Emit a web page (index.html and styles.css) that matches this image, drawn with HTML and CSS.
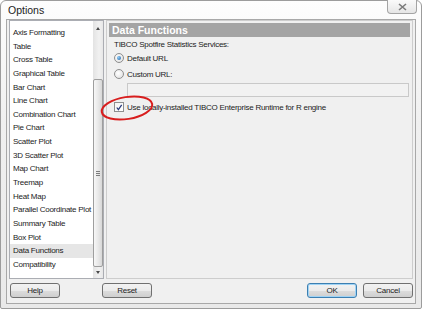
FILE: index.html
```html
<!DOCTYPE html>
<html lang="en">
<head>
  <meta charset="UTF-8">
  <title>Options</title>
  <link rel="stylesheet" href="styles.css">
</head>
<body>
  <div class="window">
    <div class="titlebar">
      <span class="title">Options</span>
      <button class="close" aria-label="Close">
        <svg width="9" height="8" viewBox="0 0 9 8"><path d="M1 1 L8 7 M8 1 L1 7" stroke="#7a7a7a" stroke-width="1.6" fill="none"/></svg>
      </button>
    </div>

    <div class="client">
      <div class="main">
        <div class="listbox">
          <ul class="items">
            <li>Axis Formatting</li>
            <li>Table</li>
            <li>Cross Table</li>
            <li>Graphical Table</li>
            <li>Bar Chart</li>
            <li>Line Chart</li>
            <li>Combination Chart</li>
            <li>Pie Chart</li>
            <li>Scatter Plot</li>
            <li>3D Scatter Plot</li>
            <li>Map Chart</li>
            <li>Treemap</li>
            <li>Heat Map</li>
            <li>Parallel Coordinate Plot</li>
            <li>Summary Table</li>
            <li>Box Plot</li>
            <li class="selected">Data Functions</li>
            <li>Compatibility</li>
          </ul>
          <div class="scrollbar">
            <span class="arrow up"></span>
            <div class="thumb"><span class="grip"></span></div>
            <span class="arrow down"></span>
          </div>
        </div>

        <div class="panel">
          <div class="panel-head">Data Functions</div>
          <div class="panel-body">
            <p class="label">TIBCO Spotfire Statistics Services:</p>
            <div class="option"><span class="radio checked"></span>Default URL</div>
            <div class="option custom"><span class="radio"></span>Custom URL:</div>
            <div class="textbox"></div>
            <div class="option check-row">
              <span class="checkbox">
                <svg width="9" height="9" viewBox="0 0 9 9"><path d="M2 4.5 L3.8 7 L7.5 1.5" stroke="#2b3d7d" stroke-width="1.4" fill="none"/></svg>
              </span>Use locally-installed TIBCO Enterprise Runtime for R engine
            </div>
          </div>
        </div>
      </div>

      <div class="buttons">
        <button class="btn">Help</button>
        <button class="btn reset">Reset</button>
        <span class="spacer"></span>
        <button class="btn default">OK</button>
        <button class="btn">Cancel</button>
      </div>
    </div>

    <svg class="mark" width="60" height="34" viewBox="0 0 60 34">
      <ellipse cx="28" cy="16" rx="25.5" ry="11" transform="rotate(-9 28 16)" stroke="#d81e1e" stroke-width="2" fill="none"/>
    </svg>
  </div>
</body>
</html>
```

FILE: styles.css
```css
* {
  box-sizing: border-box;
}
body {
  margin: 0;
  background: #ffffff;
  font-family: "Liberation Sans", Arial, sans-serif;
  font-size: 8px;
  letter-spacing: -0.25px;
  color: #1c1c1c;
}
.window {
  position: relative;
  width: 422px;
  height: 309px;
  padding: 0 5px 4px 5px;
  border: 1px solid #9c9c9c;
  border-radius: 6px 6px 2px 2px;
  background: linear-gradient(to bottom, #fdfdfd 0%, #f0f0f0 40%, #e9e9e9 100%);
  display: flex;
  flex-direction: column;
}
.titlebar {
  height: 19px;
  display: flex;
  align-items: flex-start;
  justify-content: space-between;
}
.title {
  font-size: 10.5px;
  letter-spacing: 0;
  padding: 3px 0 0 2px;
  color: #222;
}
.close {
  width: 30px;
  height: 14px;
  margin: -1px -1px 0 0;
  padding: 0;
  border: 1px solid #a4a4a4;
  border-top: none;
  border-radius: 0 0 4px 4px;
  background: linear-gradient(to bottom, #fafafa, #e6e6e6);
  display: flex;
  align-items: center;
  justify-content: center;
}
.client {
  flex: 1;
  border: 1px solid #a8a8a8;
  background: #f0f0f0;
  padding: 0 2px 5px 2px;
  display: flex;
  flex-direction: column;
}
.main {
  height: 259px;
  display: flex;
  gap: 2px;
}

/* list on the left */
.listbox {
  width: 95px;
  border: 1px solid #abadb3;
  background: #ffffff;
  display: flex;
}
.items {
  flex: 1;
  list-style: none;
  margin: 0;
  padding: 5px 0 0 0;
}
.items li {
  height: 13.65px;
  line-height: 13.65px;
  padding-left: 3px;
  white-space: nowrap;
}
.items li.selected {
  background: #e6e6e6;
}
.scrollbar {
  width: 10px;
  background: linear-gradient(to right, #e3e3e3, #f1f1f1 60%, #e7e7e7);
  display: flex;
  flex-direction: column;
  align-items: center;
  padding: 6px 0 4px 0;
}
.arrow {
  width: 0;
  height: 0;
  border-left: 2.5px solid transparent;
  border-right: 2.5px solid transparent;
}
.arrow.up {
  border-bottom: 3px solid #4a4a4a;
}
.arrow.down {
  border-top: 3px solid #4a4a4a;
}
.thumb {
  width: 10px;
  margin: 49px 0 4px 0;
  flex: 1;
  border: 1px solid #9e9e9e;
  border-radius: 2px;
  background: linear-gradient(to right, #f7f7f7, #e9e9e9 50%, #d8d8d8);
  display: flex;
  align-items: center;
  justify-content: center;
}
.grip {
  width: 4px;
  height: 5px;
  border-top: 1px solid #7c7c7c;
  border-bottom: 1px solid #7c7c7c;
  background: linear-gradient(to bottom, transparent 1px, #7c7c7c 1px, #7c7c7c 2px, transparent 2px);
}

/* settings panel */
.panel {
  flex: 1;
  border: 1px solid #cdcdcd;
  padding: 2px;
  display: flex;
  flex-direction: column;
}
.panel-head {
  height: 14px;
  line-height: 14px;
  background: #a4a4a4;
  color: #ffffff;
  font-weight: bold;
  font-size: 10.5px;
  letter-spacing: 0;
  padding-left: 3px;
}
.panel-body {
  padding: 2px 0 0 5px;
}
.label {
  margin: 0;
  height: 12px;
  line-height: 12px;
}
.option {
  display: flex;
  align-items: center;
  height: 14px;
  white-space: nowrap;
}
.option.custom {
  margin-top: 2px;
}
.radio {
  width: 10px;
  height: 10px;
  margin: 0 3px 0 0;
  border: 1px solid #8e8e8e;
  border-radius: 50%;
  background: radial-gradient(circle at 40% 40%, #ffffff, #dcdcdc);
  display: flex;
  align-items: center;
  justify-content: center;
}
.radio.checked::after {
  content: "";
  width: 4px;
  height: 4px;
  border-radius: 50%;
  background: radial-gradient(circle at 35% 35%, #8ccaf4, #1d5fa6);
}
.textbox {
  height: 14px;
  margin: 2px 1px 0 13px;
  border: 1px solid #c9c9c9;
  background: #f2f2f2;
}
.check-row {
  margin-top: 3px;
}
.checkbox {
  width: 10px;
  height: 10px;
  margin: 0 3px 0 0;
  border: 1px solid #8e8f8f;
  background: linear-gradient(to bottom right, #f4f4f4, #ffffff);
  display: flex;
  align-items: center;
  justify-content: center;
}

/* bottom buttons */
.buttons {
  margin-top: 4px;
  padding-left: 1px;
  display: flex;
  gap: 6px;
}
.spacer {
  flex: 1;
}
.btn {
  width: 50px;
  height: 15px;
  padding: 0;
  font-family: inherit;
  font-size: 8px;
  letter-spacing: -0.25px;
  color: #1c1c1c;
  border: 1px solid #707070;
  border-radius: 3px;
  background: linear-gradient(to bottom, #f2f2f2 0%, #ebebeb 50%, #dddddd 51%, #cfcfcf 100%);
}
.btn.reset {
  margin-left: 36px;
}
.btn.default {
  border-color: #3c7fb1;
  box-shadow: inset 0 0 0 1px #9fd3f5;
}

/* red annotation ring */
.mark {
  position: absolute;
  left: 98px;
  top: 91px;
}
```
